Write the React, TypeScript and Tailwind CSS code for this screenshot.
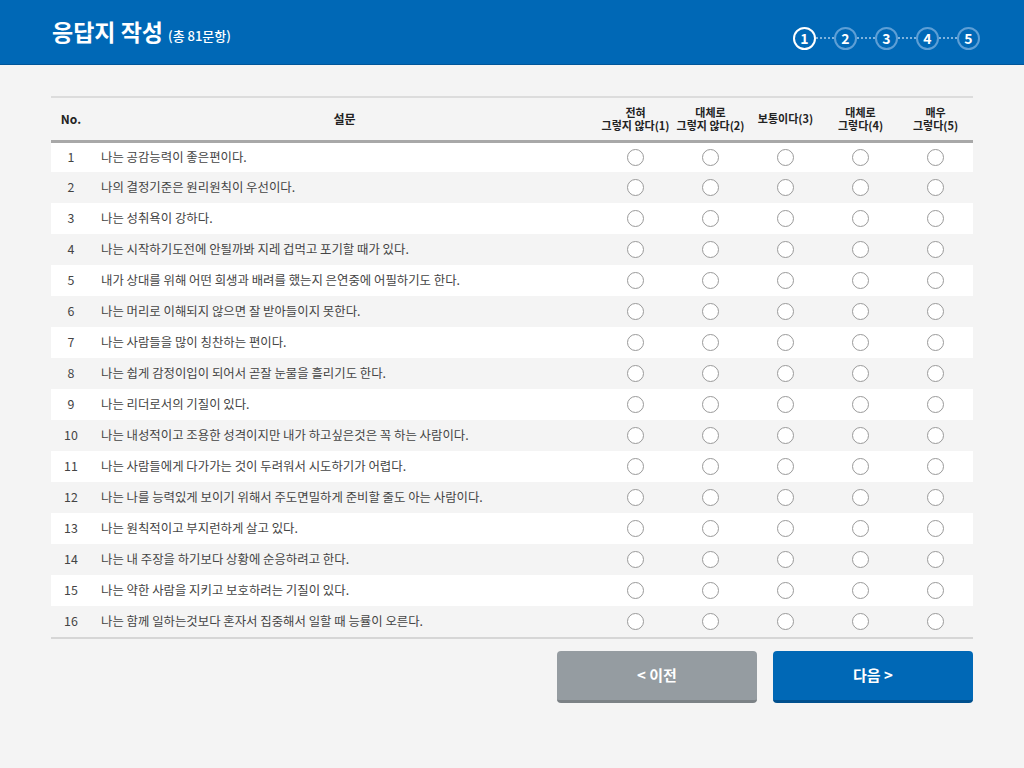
import React from 'react';

const questions = [
  '나는 공감능력이 좋은편이다.',
  '나의 결정기준은 원리원칙이 우선이다.',
  '나는 성취욕이 강하다.',
  '나는 시작하기도전에 안될까봐 지레 겁먹고 포기할 때가 있다.',
  '내가 상대를 위해 어떤 희생과 배려를 했는지 은연중에 어필하기도 한다.',
  '나는 머리로 이해되지 않으면 잘 받아들이지 못한다.',
  '나는 사람들을 많이 칭찬하는 편이다.',
  '나는 쉽게 감정이입이 되어서 곧잘 눈물을 흘리기도 한다.',
  '나는 리더로서의 기질이 있다.',
  '나는 내성적이고 조용한 성격이지만 내가 하고싶은것은 꼭 하는 사람이다.',
  '나는 사람들에게 다가가는 것이 두려워서 시도하기가 어렵다.',
  '나는 나를 능력있게 보이기 위해서 주도면밀하게 준비할 줄도 아는 사람이다.',
  '나는 원칙적이고 부지런하게 살고 있다.',
  '나는 내 주장을 하기보다 상황에 순응하려고 한다.',
  '나는 약한 사람을 지키고 보호하려는 기질이 있다.',
  '나는 함께 일하는것보다 혼자서 집중해서 일할 때 능률이 오른다.',
];

const scale = [
  ['전혀', '그렇지 않다(1)'],
  ['대체로', '그렇지 않다(2)'],
  ['보통이다(3)'],
  ['대체로', '그렇다(4)'],
  ['매우', '그렇다(5)'],
];

function Steps() {
  return (
    <div className="flex items-center">
      {[1, 2, 3, 4, 5].map((n, i) => (
        <div key={n} className="flex items-center">
          {i > 0 && <div className="w-[18px] border-t-2 border-dotted border-[#7fb3de]" />}
          <div
            className={
              n === 1
                ? 'w-[23px] h-[23px] rounded-full border-2 border-white flex items-center justify-center text-[14px] font-bold text-white leading-none'
                : 'w-[23px] h-[23px] rounded-full border-2 border-[#5d9fd6] flex items-center justify-center text-[14px] font-bold text-white leading-none'
            }
          >
            {n}
          </div>
        </div>
      ))}
    </div>
  );
}

export default function App() {
  return (
    <div
      className="w-[1024px] h-[768px] bg-[#f4f4f4] overflow-hidden"
      style={{ fontFamily: '"Noto Sans CJK KR", "Noto Sans", sans-serif' }}
    >
      <header className="h-[65px] bg-[#0068b6] border-b border-[#00569a] flex items-center justify-between pl-[52px] pr-[44px]">
        <h1 className="text-white flex items-baseline gap-[5px] -mt-[2px]">
          <span className="text-[23px] font-bold">응답지 작성</span>
          <span className="text-[13px] font-medium">(총 81문항)</span>
        </h1>
        <div className="mt-[12px]">
          <Steps />
        </div>
      </header>

      <main className="px-[51px] pt-[31px]">
        <table className="w-full border-collapse table-fixed">
          <colgroup>
            <col className="w-[40px]" />
            <col />
            <col className="w-[75px]" />
            <col className="w-[75px]" />
            <col className="w-[75px]" />
            <col className="w-[75px]" />
            <col className="w-[75px]" />
          </colgroup>
          <thead>
            <tr className="border-t-2 border-[#dcdcdc] border-b-[3px] border-b-[#a8a8a8] h-[44px]">
              <th className="text-[12px] font-bold text-[#222] text-center">No.</th>
              <th className="text-[12px] font-bold text-[#222] text-center">설문</th>
              {scale.map((s, i) => (
                <th key={i} className="text-[11px] font-bold text-[#222] text-center leading-[13px] whitespace-nowrap">
                  {s.map((line, j) => (
                    <div key={j}>{line}</div>
                  ))}
                </th>
              ))}
            </tr>
          </thead>
          <tbody>
            {questions.map((q, i) => (
              <tr key={i} className={i % 2 === 0 ? 'bg-white h-[31px]' : 'h-[31px]'}>
                <td className="text-center text-[12.4px] text-[#444] h-[31px]">{i + 1}</td>
                <td className="pl-[10px] text-[12.4px] text-[#444] whitespace-nowrap">{q}</td>
                {scale.map((_, j) => (
                  <td key={j}>
                    <span className="block mx-auto w-[17px] h-[17px] rounded-full border border-[#9a9a9a] bg-white" />
                  </td>
                ))}
              </tr>
            ))}
          </tbody>
        </table>
        <div className="border-t-2 border-[#d6d6d6]" />

        <div className="flex justify-end gap-[16px] mt-[12px]">
          <button className="w-[200px] h-[52px] rounded-[4px] bg-[#959ca1] border-b-[3px] border-[#7c8286] text-white text-[15px] font-bold">
            &lt; 이전
          </button>
          <button className="w-[200px] h-[52px] rounded-[4px] bg-[#0068b6] border-b-[3px] border-[#00508e] text-white text-[15px] font-bold">
            다음 &gt;
          </button>
        </div>
      </main>
    </div>
  );
}
